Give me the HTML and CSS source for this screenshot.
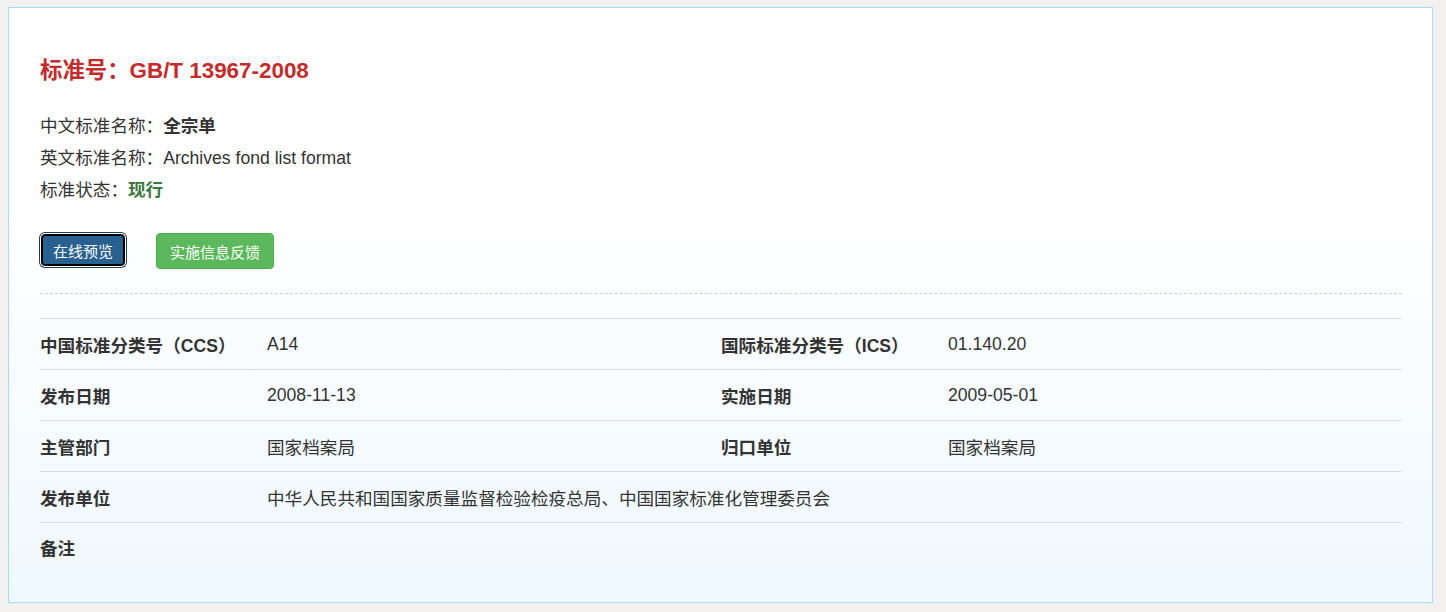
FILE: index.html
```html
<!DOCTYPE html>
<html lang="zh-CN">
<head>
    <meta charset="UTF-8">
    <title>GB/T 13967-2008 全宗单</title>
    <link rel="stylesheet" href="styles.css">
</head>
<body>
    <div class="detail-box">
        <h3 class="std-title">标准号：GB/T 13967-2008</h3>
        <div class="std-info">
            <p>中文标准名称：<strong>全宗单</strong></p>
            <p>英文标准名称：Archives fond list format</p>
            <p>标准状态：<strong class="status">现行</strong></p>
        </div>
        <div class="actions">
            <button class="btn btn-primary">在线预览</button>
            <button class="btn btn-success">实施信息反馈</button>
        </div>
        <div class="divider"></div>
        <div class="info-table">
            <div class="row">
                <div class="label">中国标准分类号（CCS）</div>
                <div class="value">A14</div>
                <div class="label">国际标准分类号（ICS）</div>
                <div class="value">01.140.20</div>
            </div>
            <div class="row">
                <div class="label">发布日期</div>
                <div class="value">2008-11-13</div>
                <div class="label">实施日期</div>
                <div class="value">2009-05-01</div>
            </div>
            <div class="row">
                <div class="label">主管部门</div>
                <div class="value">国家档案局</div>
                <div class="label">归口单位</div>
                <div class="value">国家档案局</div>
            </div>
            <div class="row">
                <div class="label">发布单位</div>
                <div class="value wide">中华人民共和国国家质量监督检验检疫总局、中国国家标准化管理委员会</div>
            </div>
            <div class="row last">
                <div class="label">备注</div>
                <div class="value wide"></div>
            </div>
        </div>
    </div>
</body>
</html>
```

FILE: styles.css
```css
body {
    margin: 7px 8px 0 8px;
    background: #f2f1ef;
    font-family: "Liberation Sans", "Noto Sans CJK SC", sans-serif;
    font-size: 17.6px;
    color: #333;
}

.detail-box {
    box-sizing: border-box;
    width: 1425px;
    padding: 51px 30px 30px 31px;
    border: 1px solid #a8dbf4;
    background: linear-gradient(to bottom, #ffffff 0%, #ffffff 35%, #eff8ff 100%);
}

.std-title {
    margin: 0 0 27px 0;
    font-size: 22.4px;
    line-height: 24px;
    color: #c12c2c;
    font-weight: bold;
}

.std-info p {
    margin: 0;
    line-height: 32px;
}

.std-info strong {
    font-weight: bold;
}

.status {
    color: #3c763d;
}

.actions {
    display: flex;
    gap: 31px;
    margin-top: 27px;
    padding-left: 1px;
}

.btn {
    height: 36px;
    padding: 0 13px;
    border: 1px solid transparent;
    border-radius: 4px;
    color: #fff;
    font-family: inherit;
    font-size: 15px;
    cursor: pointer;
}

.btn-primary {
    height: 32px;
    margin-top: 1px;
    padding: 0 11px;
    background-color: #286090;
    border: 1px solid #000;
    box-shadow: inset 0 0 0 1px #000, 0 0 0 1px #fff, 0 0 0 2px #1f3b57;
}

.btn-success {
    background-color: #5cb85c;
    border-color: #4cae4c;
}

.divider {
    margin-top: 24px;
    border-top: 1px dashed #ccc;
}

.info-table {
    margin-top: 24px;
}

.row {
    box-sizing: border-box;
    display: grid;
    grid-template-columns: 2fr 4fr 2fr 4fr;
    height: 51px;
    align-items: center;
    border-top: 1px solid #ddd;
}

.row.last {
    height: 50px;
}

.label {
    font-weight: bold;
}

.value.wide {
    grid-column: span 3;
}
```
